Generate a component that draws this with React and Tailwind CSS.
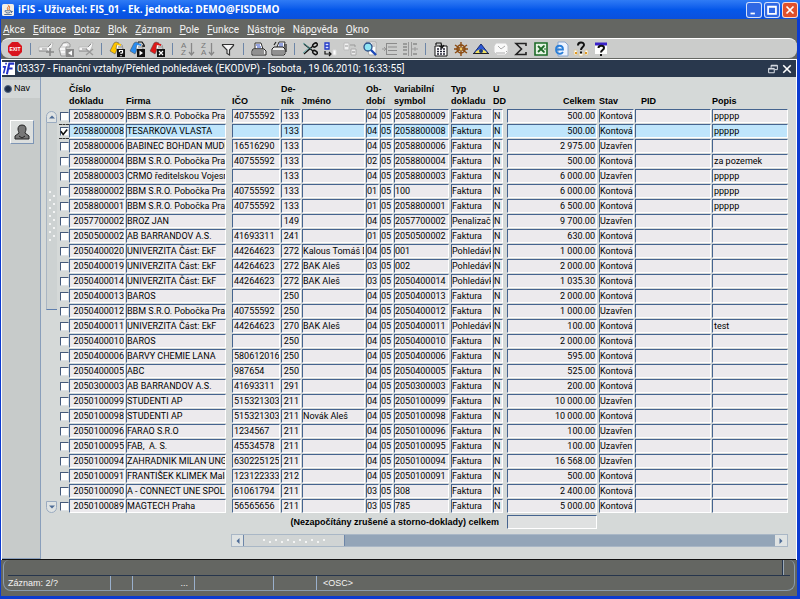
import React from "react";
import clsx from "clsx";

const menu = [
  ["", "A", "kce"],
  ["", "E", "ditace"],
  ["", "D", "otaz"],
  ["", "B", "lok"],
  ["", "Z", "áznam"],
  ["", "P", "ole"],
  ["", "F", "unkce"],
  ["", "N", "ástroje"],
  ["Náp", "o", "věda"],
  ["", "O", "kno"],
];

// cislo, firma, ico, denik, jmeno, ob, dobi, symbol, typ, celkem, stav, popis
const rows = [
  ["2058800009", "BBM S.R.O. Pobočka Prah", "40755592", "133", "", "04", "05", "2058800009", "Faktura", "500.00", "Kontová", "ppppp"],
  ["2058800008", "TESARKOVA VLASTA", "", "133", "", "04", "05", "2058800008", "Faktura", "500.00", "Kontová", "ppppp"],
  ["2058800006", "BABINEC BOHDAN MUDR", "16516290", "133", "", "04", "05", "2058800006", "Faktura", "2 975.00", "Uzavřen", ""],
  ["2058800004", "BBM S.R.O. Pobočka Prah", "40755592", "133", "", "02", "05", "2058800004", "Faktura", "500.00", "Kontová", "za pozemek"],
  ["2058800003", "CRMO ředitelskou Vojesní", "", "133", "", "04", "05", "2058800003", "Faktura", "6 000.00", "Uzavřen", "ppppp"],
  ["2058800002", "BBM S.R.O. Pobočka Prah", "40755592", "133", "", "01", "05", "100", "Faktura", "6 000.00", "Kontová", "ppppp"],
  ["2058800001", "BBM S.R.O. Pobočka Prah", "40755592", "133", "", "01", "05", "2058800001", "Faktura", "6 500.00", "Kontová", "ppppp"],
  ["2057700002", "BROZ JAN", "", "149", "", "04", "05", "2057700002", "Penalizačn", "9 700.00", "Uzavřen", ""],
  ["2050500002", "AB BARRANDOV A.S.", "41693311", "241", "", "01", "05", "2050500002", "Faktura", "630.00", "Kontová", ""],
  ["2050400020", "UNIVERZITA Část: EkF", "44264623", "272", "Kalous Tomáš D", "04", "05", "001", "Pohledávk", "1 000.00", "Kontová", ""],
  ["2050400019", "UNIVERZITA Část: EkF", "44264623", "272", "BAK Aleš", "03", "05", "002", "Pohledávk", "2 000.00", "Kontová", ""],
  ["2050400014", "UNIVERZITA Část: EkF", "44264623", "272", "BAK Aleš", "03", "05", "2050400014", "Pohledávk", "1 035.30", "Kontová", ""],
  ["2050400013", "BAROS", "", "250", "", "04", "05", "2050400013", "Faktura", "2 000.00", "Kontová", ""],
  ["2050400012", "BBM S.R.O. Pobočka Prah", "40755592", "250", "", "04", "05", "2050400012", "Faktura", "1 000.00", "Uzavřen", ""],
  ["2050400011", "UNIVERZITA Část: EkF", "44264623", "270", "BAK Aleš", "04", "05", "2050400011", "Pohledávk", "100.00", "Kontová", "test"],
  ["2050400010", "BAROS", "", "250", "", "04", "05", "2050400010", "Faktura", "2 000.00", "Kontová", ""],
  ["2050400006", "BARVY CHEMIE LANA", "5806120166", "250", "", "04", "05", "2050400006", "Faktura", "595.00", "Kontová", ""],
  ["2050400005", "ABC", "987654", "250", "", "04", "05", "2050400005", "Faktura", "525.00", "Kontová", ""],
  ["2050300003", "AB BARRANDOV A.S.", "41693311", "291", "", "04", "05", "2050300003", "Faktura", "200.00", "Kontová", ""],
  ["2050100099", "STUDENTI AP", "515321303", "211", "", "04", "05", "2050100099", "Faktura", "10 000.00", "Uzavřen", ""],
  ["2050100098", "STUDENTI AP", "515321303", "211", "Novák Aleš", "04", "05", "2050100098", "Faktura", "10 000.00", "Kontová", ""],
  ["2050100096", "FARAO S.R.O", "1234567", "211", "", "04", "05", "2050100096", "Faktura", "100.00", "Uzavřen", ""],
  ["2050100095", "FAB,  A. S.", "45534578", "211", "", "04", "05", "2050100095", "Faktura", "100.00", "Uzavřen", ""],
  ["2050100094", "ZAHRADNIK MILAN UNGR", "6302251252", "211", "", "04", "05", "2050100094", "Faktura", "16 568.00", "Uzavřen", ""],
  ["2050100091", "FRANTIŠEK KLIMEK Malá", "123122333", "212", "", "04", "05", "2050100091", "Faktura", "500.00", "Kontová", ""],
  ["2050100090", "A - CONNECT UNE SPOL.", "61061794", "211", "", "03", "05", "308", "Faktura", "2 400.00", "Kontová", ""],
  ["2050100089", "MAGTECH Praha", "56565656", "211", "", "03", "05", "785", "Faktura", "5 000.00", "Kontová", ""],
];

const Svg = ({ children, className = "size-4" }) => (
  <svg viewBox="0 0 16 16" className={className} aria-hidden="true">
    {children}
  </svg>
);

const Badge = ({ children, fill = "#111" }) => (
  <>
    <rect x="8" y="8" width="8" height="8" fill={fill} />
    {children}
  </>
);

const Card = ({ color }) => (
  <>
    <path d="M1 10L5 2l2-1 3 1-3 9-1 2z" fill={color} stroke="#444" strokeWidth=".5" />
    <path d="M8 3l5 1 1 4H7z" fill="#fff" stroke="#444" strokeWidth=".5" />
    <path d="M6 2l6 1v2L8 4z" fill={color} />
    <path d="M9 6h4" stroke="#444" strokeWidth=".8" />
  </>
);

const Pencil = () => (
  <>
    <path d="M1 6h9l3-4h2l-1 4-2 4H1z" fill="#f6f6f6" stroke="#b4b4b4" strokeWidth=".8" />
    <path d="M1 10h9M4 8h5M10 6l3-3" stroke="#8d8d8d" />
  </>
);

const Printer = ({ stack }) => (
  <>
    <path d={stack ? "M6 6l2-5h6l-1 6z" : "M4 2h6l2 6H4z"} fill="#fff" stroke="#333" />
    <path d={stack ? "M8 3h4M8 5h4" : "M5 4h4M6 6h4"} stroke="#2a48c0" />
    <path d={stack ? "M1 8l2-2h9l2 2v5l-1 1H1z" : "M2 8h11l2 2v4H1v-4z"} fill="#eee" stroke="#222" />
    <path d="M2 10h11M2 12h11" stroke="#333" />
    {stack && <path d="M3 4l2-3M15 3v8" stroke="#222" strokeWidth="1.200" fill="none" />}
  </>
);

const Sort = ({ top, bottom }) => (
  <>
    <text x="1" y="7" fontSize="8" fill="#777" fontFamily="Liberation Sans">{top}</text>
    <text x="1" y="14" fontSize="8" fill="#777" fontFamily="Liberation Sans">{bottom}</text>
    <path d="M11.500 2v12M9 11l2.500 3 2.500-3" stroke="#888" strokeWidth="1.300" fill="none" />
  </>
);

const icons = {
  insert: (
    <>
      <Pencil />
      <path d="M12 7v8M8 11h8" stroke="#888" strokeWidth="1.600" />
    </>
  ),
  copy: (
    <>
      <path d="M1 8l4-6 4-1 3 2v3H8v9H3z" fill="#ddd" stroke="#999" />
      <path d="M2 8h5M3 11h4M5 4h4" stroke="#fff" strokeWidth="1.400" />
      <Badge fill="#888">
        <path d="M14 9.500v5L10 12z" fill="#fff" />
      </Badge>
    </>
  ),
  remove: (
    <>
      <Pencil />
      <path d="M8 8l7 6M15 8l-7 6" stroke="#999" strokeWidth="1.400" />
    </>
  ),
  enterQuery: (
    <>
      <Card color="#ffc400" />
      <Badge>
        <path d="M10.500 11V9.500h3V12H12v1M12 14v1.200" stroke="#fff" strokeWidth="1.200" fill="none" />
      </Badge>
    </>
  ),
  runQuery: (
    <>
      <Card color="#2a8cf0" />
      <path d="M9 1h4l2 3v2M13 5h3" stroke="#111" strokeWidth="1.200" fill="none" />
      <Badge>
        <path d="M10.500 9.500v5L14 12z" fill="#fff" />
      </Badge>
    </>
  ),
  cancelQuery: (
    <>
      <Card color="#e01818" />
      <Badge>
        <path d="M10 10l4 4M14 10l-4 4" stroke="#fff" strokeWidth="1.200" />
      </Badge>
    </>
  ),
  sortAsc: <Sort top="A" bottom="Z" />,
  sortDesc: <Sort top="Z" bottom="A" />,
  filter: <path d="M2.500 3.500h11v1L9.500 9v5l-2.500-1.500V9l-4.500-4.500z" fill="#f4f4f4" stroke="#333" strokeWidth="1.200" />,
  print: <Printer />,
  printAll: <Printer stack />,
  cut: (
    <>
      <path d="M2 3l9 7M2 13l9-8" stroke="#111" strokeWidth="1.300" />
      <path d="M1 2l8 6M1 12l6-5" stroke="#48a0a0" strokeWidth=".8" />
      <ellipse cx="13" cy="4" rx="2.500" ry="1.700" fill="none" stroke="#111" strokeWidth="1.500" transform="rotate(-35 13 4)" />
      <ellipse cx="13" cy="11.500" rx="2.500" ry="1.700" fill="none" stroke="#111" strokeWidth="1.500" transform="rotate(35 13 11.500)" />
    </>
  ),
  copyText: (
    <>
      <path d="M3 2h4v6H3zM3 5h4" fill="#dfe6ff" stroke="#2138c8" strokeWidth="1.300" />
      <path d="M3 10v3h6M7 11l2 2-2 2" stroke="#111" fill="none" strokeWidth="1.200" />
      <path d="M11 9h3v5h-3z" fill="#fff" stroke="#ddd" />
    </>
  ),
  paste: (
    <>
      <path d="M2 2h5v7H2z" fill="#f2f2f2" stroke="#bbb" />
      <path d="M8 4h5v2M3 5h3" stroke="#999" fill="none" />
      <path d="M9 8h5v6H9z" fill="#eee" stroke="#aaa" />
      <path d="M10 11h3" stroke="#888" />
    </>
  ),
  find: (
    <>
      <path d="M4 1h10v13H7z" fill="#fff" stroke="#aaa" />
      <path d="M10 3h3M10 5h3" stroke="#999" />
      <circle cx="6" cy="6" r="4" fill="#8fe4f4" stroke="#2a4e88" strokeWidth="1.300" />
      <path d="M9 9l5 5" stroke="#1d49b8" strokeWidth="2.400" />
    </>
  ),
  list: (
    <>
      <path d="M5 2.500h10M6 6h9M6 9.500h9M5 13.500h10M4.500 2v12" stroke="#8b8b8b" />
      <path d="M0 8h4M2 6l2 2-2 2" stroke="#999" fill="none" />
    </>
  ),
  tree: (
    <>
      <path d="M1 3h4M1 6h4M1 9h4M1 13h4M11 3h4M11 13h4" stroke="#8b8b8b" strokeWidth="1.300" />
      <path d="M6.500 1v14M9.500 1v14M10 8h6M13 6v4" stroke="#999" />
    </>
  ),
  calendar: (
    <>
      <path d="M2 5h12v10H2z" fill="#fff" stroke="#111" />
      <path d="M4 8h2M7 8h2M10 8h2M4 10.500h2M7 10.500h2M10 10.500h2M4 13h2M7 13h2M10 13h2" stroke="#223" strokeWidth="1.400" />
      <path d="M3 2h5l1 4M6.500 5L9 7l2-3M3 4V2" stroke="#111" strokeWidth="1.200" fill="none" />
    </>
  ),
  wheel: (
    <>
      <path d="M8 1v14M2 4l12 8M2 12l12-8M1 8h14" stroke="#8a4a10" strokeWidth="1.400" />
      <circle cx="8" cy="8" r="4" fill="none" stroke="#8a4a10" strokeWidth="1.500" />
      <circle cx="8" cy="8" r="1.400" fill="#f0c860" />
    </>
  ),
  eye: (
    <>
      <path d="M1 12l7-9 7 9z" fill="#2b58d8" stroke="#182c70" />
      <path d="M2 12c3-5 9-5 12 0z" fill="#f0e060" />
      <circle cx="8" cy="10" r="2" fill="#18357c" />
      <path d="M0 12.500h16" stroke="#222" />
    </>
  ),
  clock: (
    <>
      <path d="M3 2h10l2 3v6l-3 3H4l-3-3V5z" fill="#fafafa" stroke="#ccc" />
      <path d="M5 5l3 3 4-3M3 12h9M13 11l1-1" stroke="#aaa" fill="none" />
    </>
  ),
  sum: <path d="M13 5V2.500H3L8.500 8 3 13.500h10V11" fill="none" stroke="#222" strokeWidth="1.600" />,
  excel: (
    <>
      <path d="M2 2h12v12H2z" fill="#e6f4e4" stroke="#1d6b27" strokeWidth="1.600" />
      <path d="M5 5l6 6M11 5l-6 6" stroke="#1d6b27" strokeWidth="1.800" />
      <path d="M10 5h2M11 8h2M10 11h2" stroke="#1d6b27" />
    </>
  ),
  browser: (
    <>
      <path d="M5 1h7l3 3v11H5z" fill="#eef4ff" stroke="#8aa6cc" />
      <path d="M10 11c-2 3-7 2-7-2.500 0-5 7-5 7 0H3" fill="none" stroke="#2b7fd8" strokeWidth="1.800" />
    </>
  ),
  helpKeys: (
    <>
      <path d="M1 9h3v5H1zM12 9h3v5h-3zM6 12h4v3H6z" fill="#fff" stroke="#d8c9a4" />
      <path d="M2 12h2M12 12h2" stroke="#e39a20" strokeWidth="2" />
      <path d="M5 4.500C5 .5 11 .5 11 4 11 6 8 6 8 9" fill="none" stroke="#111" strokeWidth="2" />
      <path d="M8 10.500v2" stroke="#111" strokeWidth="2" />
    </>
  ),
  help: (
    <>
      <path d="M2 2h12v11H2z" fill="#fff" />
      <path d="M2 3h12" stroke="#3a22c8" strokeWidth="3" />
      <path d="M5.500 7c0-3 5.500-3 5.500 0 0 2-3 2-3 4.500" fill="none" stroke="#111" strokeWidth="2" />
      <path d="M8 13v2" stroke="#111" strokeWidth="2" />
    </>
  ),
};

const toolbar = [
  [["insert", "Nový záznam"], ["copy", "Kopie záznamu"], ["remove", "Zrušit záznam"]],
  [["enterQuery", "Zadat dotaz"], ["runQuery", "Provést dotaz"], ["cancelQuery", "Zrušit dotaz"]],
  [["sortAsc", "Třídit vzestupně"], ["sortDesc", "Třídit sestupně"], ["filter", "Filtr"]],
  [["print", "Tisk"], ["printAll", "Tisk všeho"]],
  [["cut", "Vyjmout"], ["copyText", "Kopírovat"], ["paste", "Vložit"], ["find", "Hledat"], ["list", "Seznam"], ["tree", "Strom"]],
  [["calendar", "Kalendář"], ["wheel", "Nastavení"], ["eye", "Náhled"], ["clock", "Hodiny"], ["sum", "Součet"], ["excel", "Excel"], ["browser", "Prohlížeč"], ["helpKeys", "Klávesy"], ["help", "Pomoc"]],
];

const TitleBar = () => (
  <header className="flex h-[19px] shrink-0 items-center gap-1 bg-linear-to-b from-[#2f7bf5] via-[#0558ea] to-[#0b50dc] pr-0.5 pl-0.5 text-white">
    <Svg className="size-3">
      <rect width="16" height="16" rx="2" fill="#f2efe6" />
      <path d="M8 1c3 2-3 4 0 7M10 3c1 2-2 3 0 5" stroke="#e06a1c" strokeWidth="1.300" fill="none" />
      <path d="M4 9h8c0 4-8 4-8 0zM12 10h2l-2 2M3 14h10" stroke="#47658f" fill="none" strokeWidth="1.200" />
    </Svg>
    <h1 className="flex-1 truncate font-['Open_Sans',sans-serif] text-[10px] font-bold">
      iFIS - Uživatel: FIS_01 - Ek. jednotka: DEMO@FISDEMO
    </h1>
    <div className="flex gap-0.5">
      <WindowButton label="Minimalizovat" d="M4 12h5" />
      <WindowButton label="Maximalizovat" d="M3.500 4h9v8.500h-9zM3 4.500h10" />
      <WindowButton label="Zavřít" d="M4 4l8 8M12 4l-8 8" close />
    </div>
  </header>
);

const WindowButton = ({ label, d, close }) => (
  <button
    aria-label={label}
    className={clsx(
      "grid size-4 place-content-center rounded-[3px] border border-white/80",
      close ? "bg-[#e0502c]" : "bg-[#2f68e4]"
    )}
  >
    <Svg className="size-3.5">
      <path d={d} stroke="#fff" strokeWidth="2" fill="none" />
    </Svg>
  </button>
);

const MenuBar = () => (
  <nav className="flex h-[19px] shrink-0 items-center gap-2 px-0.5 pt-0.5 font-[Roboto,sans-serif] text-[10px] text-[#f4f4f4]">
    {menu.map(([before, key, after]) => (
      <button key={before + key + after}>
        {before}
        <u>{key}</u>
        {after}
      </button>
    ))}
  </nav>
);

const Toolbar = () => (
  <div className="flex h-5 shrink-0 items-center rounded-lg border-t border-white bg-[#cbcccb] pl-1">
    <button
      aria-label="Konec"
      className="grid size-5 place-content-center"
    >
      <svg viewBox="0 0 16 16" className="size-4" aria-hidden="true">
        <path d="M5 1h6l4 4v6l-4 4H5l-4-4V5z" fill="#d9141e" />
        <text x="8" y="10" fontSize="5" fontWeight="bold" textAnchor="middle" fill="#fff" fontFamily="Liberation Sans">EXIT</text>
      </svg>
    </button>
    {toolbar.map((group, i) => (
      <div key={i} className="flex items-center">
        <span className="mx-[5px] h-3 w-px bg-[#6d86a8]" />
        {group.map(([icon, label]) => (
          <button key={icon} aria-label={label} className="grid h-5 w-5 place-content-center">
            <Svg>{icons[icon]}</Svg>
          </button>
        ))}
      </div>
    ))}
  </div>
);

const Caption = () => (
  <div className="flex h-[17px] shrink-0 items-center gap-0.5 bg-[#29384d] pr-1 text-white">
    <svg viewBox="0 0 16 16" className="size-[13px]" aria-hidden="true">
      <rect width="16" height="16" fill="#fff" />
      <path d="M1 6h3L2 14M4 2h2" stroke="#2230c8" strokeWidth="2" fill="none" />
      <path d="M6 15L9 2h6M8 8h5" stroke="#2230c8" strokeWidth="2.500" fill="none" />
    </svg>
    <h2 className="flex-1 truncate font-[Roboto,sans-serif] text-[10px]">
      03337 - Finanční vztahy/Přehled pohledávek (EKODVP) - [sobota , 19.06.2010; 16:33:55]
    </h2>
    <div className="flex gap-1">
      <button aria-label="Obnovit">
        <Svg className="size-2.5">
          <path d="M5 2h10v7h-4M5 2v4M1 7h9v7H1zM5 3h10M1 8h9" stroke="#e8ecf2" strokeWidth="1.500" fill="none" />
        </Svg>
      </button>
      <button aria-label="Zavřít okno">
        <Svg className="size-2.5">
          <path d="M2 2l12 12M14 2L2 14" stroke="#fff" strokeWidth="2.500" />
        </Svg>
      </button>
    </div>
  </div>
);

const SideNav = () => (
  <aside className="w-[39px] shrink-0 border-r border-b border-[#8a9fbb] bg-[#c7cbca]">
    <label className="mt-[3px] flex h-[18px] items-center gap-0.5 bg-[#d3d7d7] pl-0.5 text-[9px]">
      <input
        type="radio"
        name="nav"
        defaultChecked
        className="size-2 appearance-none rounded-full border border-[#556a88] bg-[#1f2f48]"
      />
      Nav
    </label>
    <button
      aria-label="Osoba"
      className="mt-[22px] ml-2 grid size-6 place-content-center border border-[#7d95b5] border-t-white border-l-white bg-[#dcdfde]"
    >
      <Svg>
        <path d="M8 1c3 0 4 2 4 4 0 2-1 3-1 4l4 3v3H1v-3l4-3c0-1-1-2-1-4 0-2 1-4 4-4z" fill="#777" stroke="#222" />
        <path d="M5 12l3 2 3-2" stroke="#222" fill="none" />
      </Svg>
    </button>
  </aside>
);

const Grip = ({ count, vertical }) => (
  <div className={clsx("flex", vertical ? "flex-col gap-0.5" : "gap-1")}>
    {Array.from({ length: count }, (_, i) => (
      <span
        key={i}
        className={clsx(
          "size-0.5 rounded-full bg-white",
          i % 2 && (vertical ? "ml-1" : "mt-0.5")
        )}
      />
    ))}
  </div>
);

const VerticalScroll = () => (
  <div className="mt-[28px] mb-[46px] flex w-[11px] shrink-0 flex-col">
    <button
      aria-label="Nahoru"
      className="grid h-3 place-content-center rounded-t-full border border-[#9aabc0] bg-[#dfe3e3]"
    >
      <Svg className="size-2">
        <path d="M2 11l6-6 6 6z" fill="#4e6c96" />
      </Svg>
    </button>
    <div className="grid h-[187px] place-content-center border-b border-l border-b-[#5f7fae] border-l-[#a9b5c2] bg-[#cdd2d2]">
      <Grip count={13} vertical />
    </div>
    <div className="flex-1" />
    <button
      aria-label="Dolů"
      className="grid h-3 place-content-center rounded-b-full border border-[#9aabc0] bg-[#dfe3e3]"
    >
      <Svg className="size-2">
        <path d="M2 5l6 6 6-6z" fill="#4e6c96" />
      </Svg>
    </button>
  </div>
);

const HorizontalScroll = () => (
  <div className="mt-1 ml-[172px] flex h-[13px] items-stretch border border-[#a9b7c6] bg-[#93a5b8]">
    <button aria-label="Vlevo" className="grid w-3 place-content-center border-r border-[#6d86a8] bg-[#dfe3e3]">
      <Svg className="size-2">
        <path d="M11 2L5 8l6 6z" fill="#4e6c96" />
      </Svg>
    </button>
    <div className="grid w-[101px] place-content-center border-r border-[#6d86a8] bg-[#d0d4d4]">
      <Grip count={11} />
    </div>
    <div className="flex-1" />
    <button aria-label="Vpravo" className="grid w-3 place-content-center bg-[#dfe3e3]">
      <Svg className="size-2">
        <path d="M5 2l6 6-6 6z" fill="#4e6c96" />
      </Svg>
    </button>
  </div>
);

const Cell = ({ children, active, className }) => (
  <td className="p-0">
    <div
      className={clsx(
        "h-[14px] overflow-hidden border border-r-white border-b-white border-t-[#45648f] border-l-[#45648f] font-[Roboto,sans-serif] text-[9px] leading-[13px] whitespace-pre",
        active ? "bg-[#bfe5fb]" : "bg-[#eceaed]",
        className
      )}
    >
      {children}
    </div>
  </td>
);

const Row = ({ row, active }) => (
  <tr className="h-[15px] align-top">
    <td className="p-0">
      <span
        className={clsx(
          "grid h-[15px] w-[10px] place-items-center",
          active && "border-y border-dashed border-[#333]"
        )}
      >
        <input
          type="checkbox"
          aria-label={row[0]}
          defaultChecked={active}
          className="peer col-start-1 row-start-1 size-[9px] appearance-none border border-[#dfe3e6] border-t-[#44597a] border-l-[#44597a] bg-white"
        />
        <svg viewBox="0 0 10 10" className="pointer-events-none col-start-1 row-start-1 hidden size-2 peer-checked:block">
          <path d="M1 4l3 4 5-6" stroke="#111" strokeWidth="2" fill="none" />
        </svg>
      </span>
    </td>
    <Cell active={active} className="mr-px text-right">{row[0]}</Cell>
    <Cell active={active} className="mr-1.5">{row[1]}</Cell>
    <Cell active={active} className="mr-px pl-px">{row[2]}</Cell>
    <Cell active={active} className="mr-px pr-px text-right">{row[3]}</Cell>
    <Cell active={active} className="mr-px">{row[4]}</Cell>
    <Cell active={active} className="mr-px">{row[5]}</Cell>
    <Cell active={active} className="mr-px">{row[6]}</Cell>
    <Cell active={active} className="mr-0.5">{row[7]}</Cell>
    <Cell active={active} className="mr-px">{row[8]}</Cell>
    <Cell active={active} className="mr-1">N</Cell>
    <Cell active={active} className="mr-0.5 pr-px text-right">{row[9]}</Cell>
    <Cell active={active} className="mr-px">{row[10]}</Cell>
    <Cell active={active} className="mr-px" />
    <Cell active={active} className="pl-px">{row[11]}</Cell>
  </tr>
);

const DataTable = () => (
  <table className="w-full table-fixed border-collapse">
    <colgroup>
      <col className="w-[10px]" />
      <col className="w-[57px]" />
      <col className="w-[106px]" />
      <col className="w-[49px]" />
      <col className="w-[21px]" />
      <col className="w-[64px]" />
      <col className="w-[14px]" />
      <col className="w-[14px]" />
      <col className="w-[57px]" />
      <col className="w-[42px]" />
      <col className="w-[14px]" />
      <col className="w-[92px]" />
      <col className="w-[36px]" />
      <col className="w-[77px]" />
      <col />
    </colgroup>
    <thead>
      <tr className="h-[26px] text-left align-bottom text-[9px] leading-3 whitespace-nowrap [&>th]:p-0 [&>th]:pb-0.5">
        <th />
        <th>Číslo<br />dokladu</th>
        <th>Firma</th>
        <th>IČO</th>
        <th>De-<br />ník</th>
        <th>Jméno</th>
        <th colSpan={2}>Ob-<br />dobí</th>
        <th>Variabilní<br />symbol</th>
        <th>Typ<br />dokladu</th>
        <th>U<br />DD</th>
        <th className="text-right"><span className="mr-1">Celkem</span></th>
        <th>Stav</th>
        <th><span className="ml-1.5">PID</span></th>
        <th>Popis</th>
      </tr>
    </thead>
    <tbody>
      {rows.map((row, i) => (
        <Row key={row[0]} row={row} active={i === 1} />
      ))}
    </tbody>
    <tfoot>
      <tr className="h-4">
        <td colSpan={11} className="p-0 pr-2 text-right text-[9px] leading-[15px] font-bold">
          <label htmlFor="total">(Nezapočítány zrušené a storno-doklady) celkem</label>
        </td>
        <td className="p-0">
          <input
            id="total"
            readOnly
            className="block h-[14px] w-[90px] border border-r-white border-b-white border-t-[#45648f] border-l-[#45648f] bg-[#dfe1e1]"
          />
        </td>
      </tr>
    </tfoot>
  </table>
);

const StatusBar = () => (
  <footer className="mx-0.5 mb-[5px] shrink-0 rounded-b-lg rounded-t-md border border-t-0 border-[#8b9cac] px-1 text-[9px] text-[#f4f4f4]">
    <div className="flex h-4 justify-end border-b border-[#26354c] pr-1.5">
      <span className="h-full w-0.5 border-r border-l border-r-[#9aa9b8] border-l-[#26354c]" />
    </div>
    <div className="flex h-[14px] leading-[14px]">
      <span className="w-[102px]">Záznam: 2/?</span>
      <span className="w-[22px] border-l border-[#9ab0cc]" />
      <span className="w-[62px] border-l border-[#9ab0cc] pr-1.5 text-right">...</span>
      <span className="w-[79px] border-l border-[#9ab0cc]" />
      <span className="w-[43px] border-l border-[#9ab0cc]" />
      <span className="border-l border-[#9ab0cc] pl-1.5">&lt;OSC&gt;</span>
    </div>
  </footer>
);

const App = () => {
  return (
    <div className="flex min-h-screen flex-col bg-[#646662] font-['Liberation_Sans',Arial,sans-serif] text-black">
      <TitleBar />
      <div className="flex flex-1 flex-col border-r-[3px] border-b-[3px] border-l border-[#0c3bd0]">
        <MenuBar />
        <Toolbar />
        <div className="mt-px flex flex-1 flex-col border-t border-r border-l border-white">
          <Caption />
          <main className="flex flex-1 border-b border-[#111] bg-[#d5d9d8]">
            <SideNav />
            <div className="flex min-w-0 flex-1 pt-1.5 pr-2 pl-[5px]">
              <VerticalScroll />
              <div className="ml-0.5 min-w-0 flex-1">
                <DataTable />
                <HorizontalScroll />
              </div>
            </div>
          </main>
        </div>
        <StatusBar />
      </div>
    </div>
  );
};

export default App;
